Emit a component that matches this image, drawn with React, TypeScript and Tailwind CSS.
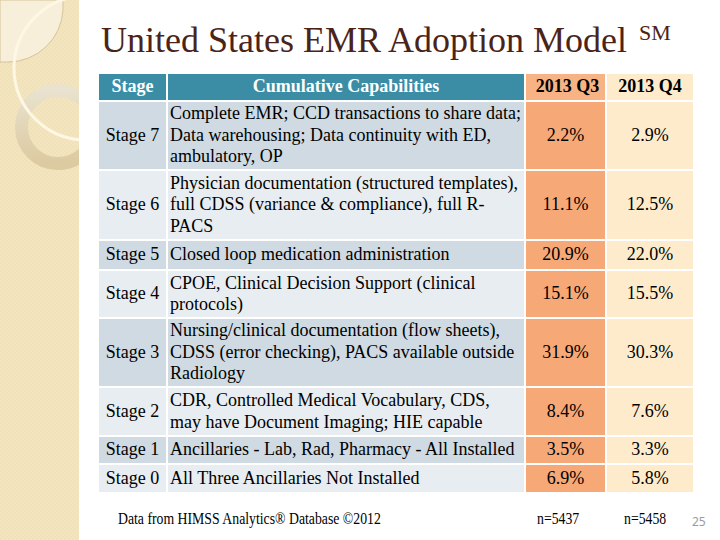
import type { ReactElement } from 'react';

type Row = {
  stage: string;
  lines: string[];
  q3: string;
  q4: string;
};

const rows: Row[] = [
  {
    stage: 'Stage 7',
    lines: ['Complete EMR; CCD transactions to share data;', 'Data warehousing; Data continuity with ED,', 'ambulatory, OP'],
    q3: '2.2%',
    q4: '2.9%',
  },
  {
    stage: 'Stage 6',
    lines: ['Physician documentation (structured templates),', 'full CDSS (variance & compliance), full R-', 'PACS'],
    q3: '11.1%',
    q4: '12.5%',
  },
  { stage: 'Stage 5', lines: ['Closed loop medication administration'], q3: '20.9%', q4: '22.0%' },
  {
    stage: 'Stage 4',
    lines: ['CPOE, Clinical Decision Support (clinical', 'protocols)'],
    q3: '15.1%',
    q4: '15.5%',
  },
  {
    stage: 'Stage 3',
    lines: ['Nursing/clinical documentation (flow sheets),', 'CDSS (error checking), PACS available outside', 'Radiology'],
    q3: '31.9%',
    q4: '30.3%',
  },
  {
    stage: 'Stage 2',
    lines: ['CDR, Controlled Medical Vocabulary, CDS,', 'may have Document Imaging; HIE capable'],
    q3: '8.4%',
    q4: '7.6%',
  },
  { stage: 'Stage 1', lines: ['Ancillaries - Lab, Rad, Pharmacy - All Installed'], q3: '3.5%', q4: '3.3%' },
  { stage: 'Stage 0', lines: ['All Three Ancillaries Not Installed'], q3: '6.9%', q4: '5.8%' },
];

// Decorative side strip of the slide theme
const SideStrip = (): ReactElement => (
  <div className="w-[79px] shrink-0 overflow-hidden bg-[#f0e1b9]">
    <svg width="79" height="540" viewBox="0 0 79 540">
      <defs>
        <pattern id="weave" width="4" height="4" patternUnits="userSpaceOnUse">
          <rect width="2" height="2" fill="#f4e7c4" />
          <rect x="2" y="2" width="2" height="2" fill="#f4e7c4" />
        </pattern>
        <linearGradient id="ring" x1="0" y1="0" x2="0" y2="1">
          <stop offset="0" stopColor="#e9e2cf" />
          <stop offset="1" stopColor="#dccaa0" />
        </linearGradient>
      </defs>
      <rect width="79" height="540" fill="url(#weave)" opacity="0.6" />
      {/* Light corner */}
      <path d="M0 0 H63 V10 A55 55 0 0 1 8 62 H0 Z" fill="#f7efda" stroke="#d6c499" strokeWidth="1" />
      {/* Ring */}
      <circle cx="58" cy="127" r="36.5" fill="none" stroke="url(#ring)" strokeWidth="13" />
      {/* Big white arc */}
      <circle cx="86" cy="68" r="72" fill="none" stroke="#fdf7e3" strokeWidth="3" />
    </svg>
  </div>
);

const App = (): ReactElement => {
  return (
    <div className="flex h-[540px] w-[720px] overflow-hidden bg-white font-serif text-black">
      <SideStrip />

      {/* Slide content */}
      <div className="flex flex-1 flex-col pl-[20px] [font-family:'Liberation_Serif','Times_New_Roman',serif]">
        {/* Title */}
        <h1 className="mt-[22px] whitespace-nowrap pl-[2px] text-[36px] leading-[36px] text-[#4b2318]">
          United States EMR Adoption Model
          <span className="relative -top-[12px] ml-[12px] text-[22px] leading-none">SM</span>
        </h1>

        {/* Table */}
        <div className="mt-[16px] grid grid-cols-[67px_356px_79px_86px] grid-rows-[26px_67px_68px_28px_46px_67px_47px_26px_27px] gap-[2px] text-[18px] leading-[21.5px]">
          <div className="flex items-center justify-center bg-[#3a8da5] font-bold text-white">Stage</div>
          <div className="flex items-center justify-center bg-[#3a8da5] font-bold text-white">
            Cumulative Capabilities
          </div>
          <div className="flex items-center justify-center bg-[#f8b384] pl-[4px] font-bold">2013 Q3</div>
          <div className="flex items-center justify-center bg-[#fdebcc] font-bold">2013 Q4</div>

          {rows.map((row, i) => {
            const shade = i % 2 === 0 ? 'bg-[#cfdae2]' : 'bg-[#e7edf1]';
            return [
              <div key={`${row.stage}-s`} className={`flex items-center justify-center whitespace-nowrap ${shade}`}>
                {row.stage}
              </div>,
              <div key={`${row.stage}-c`} className={`flex flex-col justify-center whitespace-nowrap pl-[2px] ${shade}`}>
                {row.lines.map((line) => (
                  <span key={line}>{line}</span>
                ))}
              </div>,
              <div key={`${row.stage}-q3`} className="flex items-center justify-center bg-[#f6a877]">
                {row.q3}
              </div>,
              <div key={`${row.stage}-q4`} className="flex items-center justify-center bg-[#fdebcc]">
                {row.q4}
              </div>,
            ];
          })}
        </div>

        {/* Footer */}
        <div className="mt-[18px] flex items-end whitespace-nowrap text-[16px] leading-[18px]">
          <span className="ml-[19px] inline-block w-[419px] origin-left scale-x-[0.86]">
            Data from HIMSS Analytics® Database ©2012
          </span>
          <span className="inline-block w-[87px] origin-left scale-x-[0.86]">n=5437</span>
          <span className="inline-block w-[68px] origin-left scale-x-[0.86]">n=5458</span>
          <span className="mb-[-3px] font-sans text-[12px] text-[#9c9c9c]">25</span>
        </div>
      </div>
    </div>
  );
};

export default App;
